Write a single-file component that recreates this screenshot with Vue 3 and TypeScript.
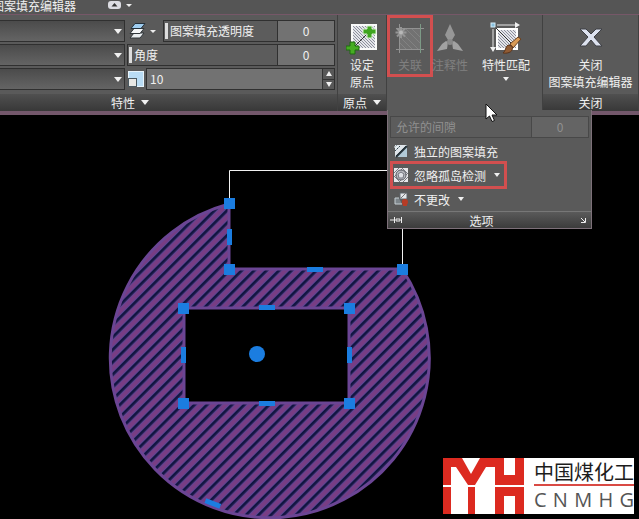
<script setup lang="ts">
import { ref } from 'vue'

interface Grip {
  x: number
  y: number
}

interface Bar extends Grip {
  angle: number
}

const transparency = ref('0')
const angle = ref('0')
const scale = ref('10')
const gap = ref('0')

const lists: string[] = ['图案填充类型', '图案填充颜色', '背景色']

const corners: Grip[] = [
  { x: 229, y: 203 },
  { x: 229, y: 269 },
  { x: 402, y: 269 },
  { x: 183, y: 308 },
  { x: 349, y: 308 },
  { x: 183, y: 403 },
  { x: 349, y: 403 },
]

const bars: Bar[] = [
  { x: 230, y: 237, angle: 90 },
  { x: 315, y: 269, angle: 0 },
  { x: 267, y: 307, angle: 0 },
  { x: 267, y: 403, angle: 0 },
  { x: 184, y: 355, angle: 90 },
  { x: 350, y: 355, angle: 90 },
  { x: 213, y: 503, angle: 21 },
]

const brand: string[] = ['C', 'N', 'M', 'H', 'G']
</script>

<template>
  <div class="app">
    <header class="tabs">
      <a class="tab" href="#editor">图案填充编辑器</a>
      <button class="collapse" type="button" aria-label="最小化功能区">
        <svg width="26" height="10" viewBox="0 0 26 10">
          <rect x="0" y="1" width="13" height="8" rx="3" fill="#dcdce2" />
          <path d="M3.500 6.500 L6.500 3 L9.500 6.500Z" fill="#333" />
          <path d="M18 4 H24 L21 7Z" fill="#eee" />
        </svg>
      </button>
    </header>

    <div class="ribbon">
      <section class="panel props">
        <div class="body prop-grid">
          <div class="col">
            <div v-for="name in lists" :key="name" class="drop">
              <select :aria-label="name"><option></option></select>
              <svg class="caret" width="8" height="5" viewBox="0 0 8 5"><path d="M0 0H8L4 5Z" /></svg>
            </div>
          </div>
          <div class="col wide">
            <div class="line">
              <button class="layers" type="button" aria-label="图层">
                <svg width="28" height="18" viewBox="0 0 28 18">
                  <path d="M5 11 H15 L11 16 H1Z" fill="#e9edf0" stroke="#30363a" />
                  <path d="M5 6.500 H15 L11 11.500 H1Z" fill="#f4f6f8" stroke="#30363a" />
                  <path d="M6 1.500 H16 L12 6.500 H2Z" fill="#9fcdf0" stroke="#24303a" />
                  <path d="M21 8 H27 L24 11Z" fill="#eee" />
                </svg>
              </button>
              <div class="slider">
                <label for="transparency">图案填充透明度</label>
                <input id="transparency" v-model="transparency" type="text" />
              </div>
            </div>
            <div class="line">
              <div class="slider">
                <label for="angle">角度</label>
                <input id="angle" v-model="angle" type="text" />
              </div>
            </div>
            <div class="line">
              <svg class="scale-icon" width="18" height="18" viewBox="0 0 18 18">
                <rect x="1.500" y="1.500" width="15" height="15" fill="#b9dcf4" stroke="#e8f4fb" />
                <rect x="1.500" y="8.500" width="8" height="8" fill="#e7e7e4" stroke="#4b5961" />
              </svg>
              <div class="scale">
                <input v-model="scale" type="text" aria-label="填充图案比例" />
                <div class="spin">
                  <button type="button" aria-label="增大"><svg width="6" height="5" viewBox="0 0 6 5"><path d="M0 5H6L3 0Z" /></svg></button>
                  <button type="button" aria-label="减小"><svg width="6" height="5" viewBox="0 0 6 5"><path d="M0 0H6L3 5Z" /></svg></button>
                </div>
              </div>
            </div>
          </div>
        </div>
        <button class="foot props-foot" type="button">特性
          <svg width="8" height="5" viewBox="0 0 8 5"><path d="M0 0H8L4 5Z" /></svg>
        </button>
      </section>

      <section class="panel origin">
        <button class="body tool" type="button">
          <svg width="32" height="34" viewBox="0 0 32 34">
            <defs>
              <pattern id="fine" width="3" height="3" patternUnits="userSpaceOnUse">
                <rect width="3" height="3" fill="#e4e5ea" />
                <path d="M0 0L3 3" stroke="#8d909c" stroke-width="1" />
              </pattern>
            </defs>
            <rect x="6" y="3" width="24" height="24" fill="url(#fine)" stroke="#fafafa" stroke-width="2" />
            <path d="M7 26L22 11" stroke="#333" />
            <path d="M21 4h5v3h4v5h-4v4h-5v-4h-4v-5h4Z" fill="#3fa51f" stroke="#d9efd2" />
            <path d="M4 20h5v4h4v4h-4v4h-5v-4h-4v-4h4Z" fill="#46ad22" stroke="#1f6b10" />
          </svg>
          <span>设定</span><span>原点</span>
        </button>
        <button class="foot" type="button">原点
          <svg width="8" height="5" viewBox="0 0 8 5"><path d="M0 0H8L4 5Z" /></svg>
        </button>
      </section>

      <section class="panel options">
        <div class="tools">
          <button class="tool assoc marked" type="button" disabled>
            <svg width="32" height="34" viewBox="0 0 32 34">
              <rect x="5" y="6" width="22" height="21" fill="#727272" />
              <path d="M6 9L24 27M6 15L18 27M6 21L12 27M12 7L26 21M18 7L26 15" stroke="#828282" />
              <path d="M5.500 2V31M2 6.500H30M2 27.500H30" stroke="#929292" fill="none" />
              <path d="M26.500 2V31" stroke="#7c9a86" />
              <path d="M7 5v11M1.500 10.500h11M3 6.500l8 8M11 6.500l-8 8" stroke="#959595" stroke-width="2" />
              <circle cx="7" cy="10.500" r="2" fill="#b8b8b8" />
            </svg>
            <span>关联</span>
          </button>
          <button class="tool annot" type="button" disabled>
            <svg width="26" height="34" viewBox="0 0 26 34">
              <path d="M13 2L18 13L15 18L13 19L11 18L8 13Z" fill="#969696" />
              <path d="M11 20L10 27L0 29L5 22L9 19Z" fill="#a2a2a2" />
              <path d="M15 20L16 27L26 29L21 22L17 19Z" fill="#a2a2a2" />
              <circle cx="13" cy="20" r="3" fill="#8a8a8a" />
            </svg>
            <span>注释性</span>
          </button>
          <button class="tool match" type="button">
            <svg width="32" height="34" viewBox="0 0 32 34">
              <rect x="7" y="7" width="20" height="20" fill="url(#fine)" stroke="#fff" stroke-width="2" />
              <path d="M3 3L23 23" stroke="#303030" />
              <path d="M3 7V26M7 3H26" stroke="#e8e8e8" />
              <path d="M0 25H6L3 30ZM25 0V6L30 3Z" fill="#f0f0f0" />
              <rect x="1" y="1" width="4" height="4" fill="#86bfdd" stroke="#d4ecf7" />
              <path d="M20 22L28 15L31 17L23 26Z" fill="#d99a55" stroke="#694020" />
              <path d="M13 31C16 29 15 25 18 23L22 24C24 29 19 32 13 31Z" fill="#925d35" stroke="#5c3419" />
            </svg>
            <span>特性匹配</span>
            <svg class="small-caret" width="6" height="4" viewBox="0 0 6 4"><path d="M0 0H6L3 4Z" /></svg>
          </button>
        </div>

        <div class="flyout">
          <div class="slider dim">
            <label for="gap">允许的间隙</label>
            <input id="gap" v-model="gap" type="text" disabled />
          </div>
          <button class="item" type="button">
            <svg width="14" height="14" viewBox="0 0 14 14">
              <rect x="1" y="1" width="12" height="12" fill="#dfe5ea" />
              <path d="M2 12L12 2M1 7L6 2M1 3L3 1" stroke="#34464f" />
              <path d="M3 13L13 3V13Z" fill="#b2cad8" />
              <path d="M2 13L13 2" stroke="#26343b" stroke-width="2" />
              <path d="M2 1v5M0 3h5" stroke="#e9f1f4" />
            </svg>
            <span>独立的图案填充</span>
          </button>
          <button class="item island" type="button">
            <svg width="14" height="14" viewBox="0 0 14 14">
              <rect width="14" height="14" fill="#e7e7ea" />
              <path d="M0 5L5 0M0 9L9 0M5 14L14 5M9 14L14 9M1 9L5 13M9 1L13 5" stroke="#777981" />
              <circle cx="7" cy="7" r="5" fill="#b9bac0" stroke="#595b63" />
              <path d="M7 4L10 6L9 10H5L4 6Z" fill="#dfe0e5" stroke="#73757e" />
            </svg>
            <span>忽略孤岛检测</span>
            <svg class="more" width="6" height="4" viewBox="0 0 6 4"><path d="M0 0H6L3 4Z" /></svg>
          </button>
          <button class="item" type="button">
            <svg width="14" height="14" viewBox="0 0 14 14">
              <path d="M5 6H1V12H8" fill="#7c8489" stroke="#c5ced3" />
              <rect x="6" y="1" width="7" height="6" fill="#e4e7eb" stroke="#5d656b" />
              <path d="M7 6L12 1" stroke="#777" />
              <path d="M8 8L13 12V14H9Z" fill="#b63c26" />
              <circle cx="11" cy="10" r="3" fill="#b63c26" />
            </svg>
            <span>不更改</span>
            <svg class="more" width="6" height="4" viewBox="0 0 6 4"><path d="M0 0H6L3 4Z" /></svg>
          </button>
          <div class="flyout-foot">
            <button type="button" aria-label="固定">
              <svg width="13" height="8" viewBox="0 0 13 8"><path d="M0 4H4M4.500 1V7M6 3H10V5H6ZM11.500 1V7" fill="none" stroke="#eee" /></svg>
            </button>
            <span>选项</span>
            <button type="button" aria-label="图案填充设置">
              <svg width="7" height="7" viewBox="0 0 7 7"><path d="M1 1L5 5M1 5.500H5.500V1" fill="none" stroke="#eee" /></svg>
            </button>
          </div>
        </div>

        <svg class="pointer" width="13" height="20" viewBox="0 0 13 20">
          <path d="M1 1V16L4.500 13L7 18.500L9.500 17.500L7 12H12Z" fill="#fff" stroke="#111" />
        </svg>
      </section>

      <section class="panel close">
        <button class="body tool" type="button">
          <svg width="24" height="34" viewBox="0 0 24 34">
            <path d="M1 7H7L12 12L17 7H23L15 15L23 24H17L12 18L7 24H1L9 15Z" fill="#dde2ef" stroke="#3c3e44" />
          </svg>
          <span>关闭</span><span>图案填充编辑器</span>
        </button>
        <div class="foot">关闭</div>
      </section>
    </div>

    <main class="canvas">
      <svg class="drawing" role="img" aria-label="图案填充对象">
        <defs>
          <pattern id="hatch" width="20" height="8.800" patternUnits="userSpaceOnUse" patternTransform="translate(0 115) rotate(-45) translate(0 -81.300)">
            <rect width="20" height="8.800" fill="#783d84" />
            <rect y="0" width="20" height="2.800" fill="#111541" />
            <rect y="2.800" width="20" height="1" fill="#5c4594" />
            <rect y="7.800" width="20" height="1" fill="#5c4594" />
          </pattern>
        </defs>
        <g transform="translate(0 -115)">
          <path d="M229.500 203V170.500H402.500V269" fill="none" stroke="#f2f2f2" />
          <path
            d="M229 204V269H402A159.500 159.500 0 1 1 229 204ZM184 308V403H349V308Z"
            fill="url(#hatch)"
            fill-rule="evenodd"
            stroke="#6b4594"
            stroke-width="3"
          />
          <g fill="#1b7de0">
            <rect v-for="g in corners" :key="`${g.x}-${g.y}`" :x="g.x - 5" :y="g.y - 5" width="11" height="11" />
            <rect
              v-for="b in bars"
              :key="`b${b.x}-${b.y}`"
              x="-8"
              y="-2"
              width="16"
              height="5"
              :transform="`translate(${b.x} ${b.y}) rotate(${b.angle})`"
            />
            <circle cx="257" cy="354" r="8" />
          </g>
        </g>
      </svg>

      <aside class="logo">
        <svg width="82" height="56" viewBox="0 0 82 56">
          <path
            fill="#dc2a20"
            fill-rule="evenodd"
            d="M0 0H19L28 16L37 0H61V17H72V0H81V27H52V9H43L32 27H25L13 9H8V27H0Z
               M0 29H8V56H0ZM25 29H32V56H25ZM52 29H81V56H72V38H61V56H52Z"
          />
        </svg>
        <div class="brand">
          <strong>中国煤化工</strong>
          <div class="latin"><span v-for="c in brand" :key="c">{{ c }}</span></div>
        </div>
      </aside>
    </main>
  </div>
</template>

<style>
body {
  margin: 0;
  background: #000;
}
</style>

<style scoped>
.app {
  display: flex;
  flex-direction: column;
  min-height: 100vh;
  background: #000;
  color: #f0f0f0;
  font: 12px/17px 'Noto Sans CJK SC', sans-serif;
}
.app * {
  box-sizing: border-box;
}
button,
input,
select {
  margin: 0;
  padding: 0;
  border: 0;
  border-radius: 0;
  background: none;
  color: inherit;
  font: inherit;
}
svg {
  display: block;
  flex: none;
  fill: #f0f0f0;
}
.tabs {
  display: flex;
  height: 14px;
  background: #555;
}
.tab {
  display: flex;
  align-items: center;
  justify-content: flex-end;
  width: 84px;
  height: 10px;
  padding-right: 8px;
  color: #f0f0f0;
  text-decoration: none;
  white-space: nowrap;
}
.collapse {
  display: flex;
  margin-left: 24px;
}
.ribbon {
  display: flex;
  height: 101px;
  border-top: 1px solid #765768;
  border-bottom: 4px solid #73576b;
  background: #5a5a5a;
}
.panel {
  display: flex;
  flex-direction: column;
  border-right: 1px solid #414141;
}
.body {
  flex: 1;
}
.foot {
  display: flex;
  align-items: center;
  justify-content: center;
  gap: 6px;
  height: 17px;
  background: linear-gradient(#505050, #383838);
}
.props {
  flex: 1;
  min-width: 0;
}
.props-foot {
  padding-right: 77px;
}
.prop-grid {
  display: flex;
  gap: 2px;
  padding: 5px 2px 0 0;
}
.col {
  display: flex;
  flex-direction: column;
  gap: 2px;
  width: 125px;
}
.wide {
  flex: 1;
}
.line,
.drop {
  display: flex;
  align-items: center;
  height: 22px;
}
.drop {
  border: 1px solid #303030;
  border-left: 0;
  background: linear-gradient(#4b4b4b, #646464);
}
.drop select {
  flex: 1;
  height: 20px;
  appearance: none;
}
.caret {
  margin: 0 2px 0 -10px;
  pointer-events: none;
}
.layers {
  padding: 0 6px 0 2px;
}
.slider {
  display: flex;
  flex: 1;
  height: 22px;
  border: 1px solid #303030;
  background: #5c5c5c;
}
.slider label {
  flex: 1;
  margin: 2px 0 2px 1px;
  padding-left: 2px;
  border-left: 3px solid #ddd;
  line-height: 15px;
}
.slider input {
  width: 57px;
  padding-bottom: 2px;
  border-left: 1px solid #303030;
  background: #727272;
  text-align: center;
}
.scale-icon {
  margin-right: 1px;
}
.scale {
  display: flex;
  flex: 1;
  height: 22px;
  border: 1px solid #303030;
  background: #727272;
}
.scale input {
  flex: 1;
  min-width: 0;
  padding: 0 0 2px 3px;
}
.spin {
  display: flex;
  flex-direction: column;
  width: 12px;
  background: #333;
  gap: 1px;
  padding-left: 1px;
}
.spin button {
  display: flex;
  flex: 1;
  align-items: center;
  justify-content: center;
  background: #585858;
}
.origin {
  width: 49px;
}
.tool {
  display: flex;
  flex-direction: column;
  align-items: center;
  padding-top: 7px;
  white-space: nowrap;
}
.options {
  position: relative;
  width: 156px;
}
.tools {
  display: flex;
}
.tool:disabled {
  color: #808080;
}
.assoc {
  width: 46px;
  height: 62px;
}
.annot {
  width: 34px;
}
.match {
  width: 50px;
  margin-left: 14px;
}
.small-caret {
  margin-top: 4px;
}
.marked,
.island {
  outline: 3px solid #d24f4f;
  outline-offset: -3px;
}
.flyout {
  position: absolute;
  z-index: 1;
  top: 95px;
  left: 0;
  width: 205px;
  padding: 6px 1px 0;
  border: 1px solid #7d7079;
  border-top: 0;
  background: #5a5a5a;
}
.dim {
  margin: 0 1px;
  color: #909090;
  border-color: #484848;
}
.dim label {
  padding-left: 4px;
  border-left: 0;
}
.dim input {
  background: #646464;
  border-color: #484848;
}
.item {
  display: flex;
  align-items: center;
  gap: 6px;
  height: 24px;
  padding: 0 7px 0 5px;
}
.item:nth-child(2) {
  margin-top: 1px;
}
.more {
  margin-left: 2px;
}
.island {
  height: 28px;
  margin: -2px 0 -2px 1px;
  padding-left: 4px;
}
.flyout-foot {
  display: flex;
  align-items: center;
  justify-content: space-between;
  height: 17px;
  margin: 0 -1px;
  padding: 0 4px 0 2px;
  border-top: 1px solid #777;
  background: linear-gradient(#5a5a5a, #3c3c3c);
}
.flyout-foot span {
  flex: 1;
  padding-right: 20px;
  text-align: center;
}
.pointer {
  position: absolute;
  z-index: 2;
  top: 88px;
  left: 98px;
}
.close {
  width: 96px;
}
.canvas {
  position: relative;
  flex: 1;
  min-height: 404px;
  overflow: hidden;
}
.drawing {
  position: absolute;
  inset: 0;
  width: 100%;
  height: 100%;
}
.logo {
  position: absolute;
  right: 5px;
  bottom: 5px;
  display: flex;
  gap: 9px;
  width: 191px;
  height: 56px;
  background: #fff;
}
.brand {
  flex: 1;
  color: #1c1c1c;
}
.brand strong {
  display: block;
  height: 28px;
  border-bottom: 2px solid #d94a44;
  font-size: 20px;
  font-weight: 400;
  line-height: 27px;
}
.latin {
  display: flex;
  justify-content: space-between;
  color: #555;
  font: 20px/28px 'Open Sans', sans-serif;
}
</style>
